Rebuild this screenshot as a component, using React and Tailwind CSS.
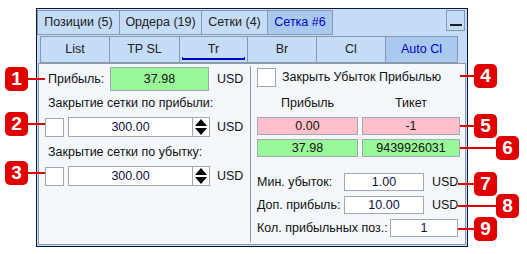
import React from "react";

const font = { fontFamily: '"Liberation Sans", Arial, sans-serif' };

function Callout({ n, x, y, lineFrom, lineTo }) {
  return (
    <>
      <div
        className="absolute h-[2px] bg-[#e00000]"
        style={{ left: Math.min(lineFrom, lineTo), width: Math.abs(lineTo - lineFrom), top: y - 1 }}
      />
      <div
        className="absolute w-[23px] h-[24px] rounded-[5px] bg-[#e00000] text-white font-bold text-[19px] leading-[24px] text-center"
        style={{ left: x, top: y - 12 }}
      >
        {n}
      </div>
    </>
  );
}

function Spinner() {
  return (
    <div className="w-[17px] h-full border-l border-[#a0a8b4] flex flex-col items-center justify-center gap-[2px]">
      <div className="w-0 h-0 border-l-[6px] border-r-[6px] border-b-[7px] border-l-transparent border-r-transparent border-b-black" />
      <div className="w-0 h-0 border-l-[6px] border-r-[6px] border-t-[7px] border-l-transparent border-r-transparent border-t-black" />
    </div>
  );
}

function Check() {
  return <div className="w-[19px] h-[19px] bg-white border border-[#a0a8b4] shrink-0" />;
}

export default function App() {
  const tabs = [
    { t: "Позиции (5)", w: 83 },
    { t: "Ордера (19)", w: 83 },
    { t: "Сетки (4)", w: 67 },
    { t: "Сетка #6", w: 66, sel: true },
  ];
  const sub = [
    { t: "List", w: 70 },
    { t: "TP SL", w: 71 },
    { t: "Tr", w: 69, under: true },
    { t: "Br", w: 70 },
    { t: "Cl", w: 70 },
    { t: "Auto Cl", w: 73, sel: true },
  ];
  return (
    <div className="relative w-[527px] h-[254px] bg-white overflow-hidden text-[12.5px] text-[#111] whitespace-nowrap" style={font}>
      <div className="absolute left-[36px] top-[8px] w-[432px] h-[239px] border border-[#0c1a34] bg-[#c4dcf8] flex flex-col">
        {/* tabs */}
        <div className="flex items-start pt-[1px] h-[27px]">
          {tabs.map((t) => (
            <div
              key={t.t}
              className={`h-[25px] border border-[#8a98ac] -mr-[1px] flex items-center justify-center ${
                t.sel ? "bg-[#a9c9ee] text-[#0000d0]" : "bg-[#c4dcf8] text-[#202020]"
              }`}
              style={{ width: t.w }}
            >
              {t.t}
            </div>
          ))}
          <div className="flex-1" />
          <div className="w-[19px] h-[21px] mr-[2px] border border-[#8a98ac] flex items-end justify-center pb-[4px]">
            <div className="w-[12px] h-[2px] bg-[#202020]" />
          </div>
        </div>
        {/* sub tabs */}
        <div className="flex ml-[3px] h-[27px]">
          {sub.map((s) => (
            <div
              key={s.t}
              className={`relative h-[27px] border border-[#8a98ac] -mr-[1px] flex items-center justify-center ${
                s.sel ? "bg-[#a9c9ee] text-[#0000d0]" : "bg-[#c4dcf8] text-[#202020]"
              }`}
              style={{ width: s.w }}
            >
              {s.t}
              {s.under && (
                <div className="absolute left-[2px] right-[2px] bottom-[2px] h-[3px] border-b-[2px] border-l border-r border-[#0000c8]" />
              )}
            </div>
          ))}
        </div>
        {/* content */}
        <div className="ml-[1px] mr-[1px] mb-[1px] flex-1 border border-[#8a98ac] bg-[#f4f8fd] flex">
          {/* left */}
          <div className="w-[211px] pl-[9px] pt-[3px] flex flex-col">
            <div className="flex items-center h-[24px]">
              <span className="w-[62px]">Прибыль:</span>
              <div className="w-[99px] h-[24px] bg-[#98f898] border border-[#a0a8b4] flex items-center justify-center">37.98</div>
              <span className="ml-[8px]">USD</span>
            </div>
            <div className="mt-[3px] h-[18px] flex items-center">Закрытие сетки по прибыли:</div>
            <div className="mt-[5px] flex items-center h-[20px] -ml-[3px]">
              <Check />
              <div className="ml-[4px] w-[142px] h-[20px] bg-white border border-[#a0a8b4] flex items-center">
                <div className="flex-1 text-center text-[#101040]">300.00</div>
                <Spinner />
              </div>
              <span className="ml-[7px]">USD</span>
            </div>
            <div className="mt-[6px] h-[18px] flex items-center">Закрытие сетки по убытку:</div>
            <div className="mt-[5px] flex items-center h-[20px] -ml-[3px]">
              <Check />
              <div className="ml-[4px] w-[142px] h-[20px] bg-white border border-[#a0a8b4] flex items-center">
                <div className="flex-1 text-center text-[#101040]">300.00</div>
                <Spinner />
              </div>
              <span className="ml-[7px]">USD</span>
            </div>
          </div>
          {/* separator */}
          <div className="w-[1px] bg-[#8a98ac] mt-[2px] mb-[2px]" />
          {/* right */}
          <div className="flex-1 pl-[6px] pt-[3px] flex flex-col">
            <div className="flex items-center h-[20px]">
              <Check />
              <span className="ml-[6px]">Закрыть Убыток Прибылью</span>
            </div>
            <div className="flex mt-[7px] h-[18px] items-center">
              <div className="w-[101px] text-center">Прибыль</div>
              <div className="ml-[4px] w-[98px] text-center">Тикет</div>
            </div>
            <div className="flex mt-[5px]">
              <div className="w-[101px] h-[18px] bg-[#ffc0cb] border border-[#a0a8b4] flex items-center justify-center">0.00</div>
              <div className="ml-[4px] w-[98px] h-[18px] bg-[#ffc0cb] border border-[#a0a8b4] flex items-center justify-center">-1</div>
            </div>
            <div className="flex mt-[4px]">
              <div className="w-[101px] h-[18px] bg-[#98f898] border border-[#a0a8b4] flex items-center justify-center">37.98</div>
              <div className="ml-[4px] w-[98px] h-[18px] bg-[#98f898] border border-[#a0a8b4] flex items-center justify-center">9439926031</div>
            </div>
            <div className="flex items-center mt-[16px] h-[18px]">
              <span className="w-[87px] shrink-0">Мин. убыток:</span>
              <div className="w-[80px] h-[18px] bg-white border border-[#a0a8b4] flex items-center justify-center text-[#101040]">1.00</div>
              <span className="ml-[8px]">USD</span>
            </div>
            <div className="flex items-center mt-[5px] h-[18px]">
              <span className="w-[87px] shrink-0">Доп. прибыль:</span>
              <div className="w-[80px] h-[18px] bg-white border border-[#a0a8b4] flex items-center justify-center text-[#101040]">10.00</div>
              <span className="ml-[8px]">USD</span>
            </div>
            <div className="flex items-center mt-[5px] h-[18px]">
              <span className="w-[133px] shrink-0">Кол. прибыльных поз.:</span>
              <div className="w-[68px] h-[18px] bg-white border border-[#a0a8b4] flex items-center justify-center text-[#101040]">1</div>
            </div>
          </div>
        </div>
      </div>

      <Callout n="1" x={5} y={79} lineFrom={27} lineTo={45} />
      <Callout n="2" x={5} y={124} lineFrom={27} lineTo={45} />
      <Callout n="3" x={5} y={173} lineFrom={27} lineTo={45} />
      <Callout n="4" x={474} y={76} lineFrom={460} lineTo={476} />
      <Callout n="5" x={474} y={126} lineFrom={460} lineTo={476} />
      <Callout n="6" x={496} y={148} lineFrom={460} lineTo={498} />
      <Callout n="7" x={474} y={184} lineFrom={458} lineTo={476} />
      <Callout n="8" x={496} y={206} lineFrom={458} lineTo={498} />
      <Callout n="9" x={474} y={229} lineFrom={458} lineTo={476} />
    </div>
  );
}
